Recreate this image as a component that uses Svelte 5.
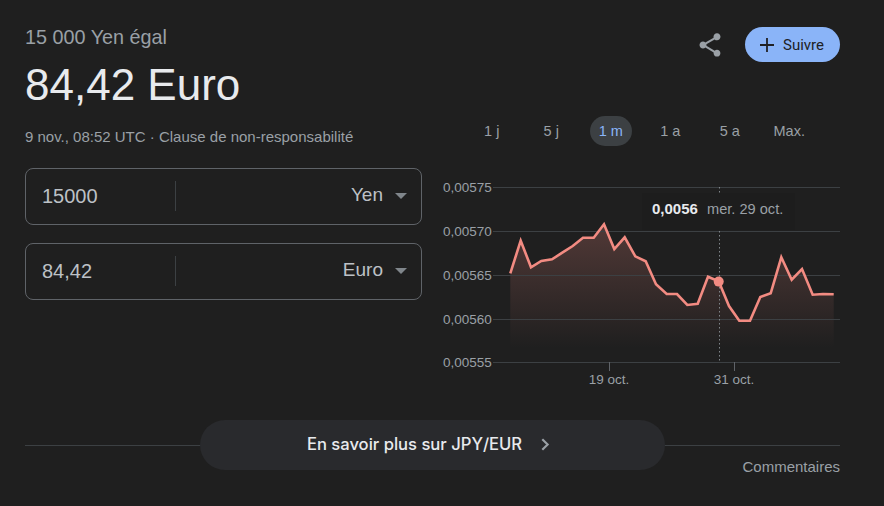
<script>
  const raw = [[211,310],[242,212],[273,292],[304,273],[336,268],[367,248],[398,228],[429,203],[461,203],[492,163],[523,237],[554,202],[586,259],[617,274],[648,343],[680,372],[711,372],[742,405],[773,401],[804,320],[836,334],[867,408],[898,452],[930,452],[961,381],[992,370],[1024,262],[1055,329],[1086,297],[1118,374],[1149,372],[1181,373]];
  const pts = raw.map(([x, y]) => [+(x / 3).toFixed(1), +(y / 3).toFixed(1)]);
  const line = pts.map((p) => p.join(',')).join(' ');
  const areaBottom = 178;
  const area = `${pts[0][0]},${areaBottom} ${line} ${pts[pts.length - 1][0]},${areaBottom}`;
  const grid = [
    { y: 17.5, label: '0,00575' },
    { y: 61.5, label: '0,00570' },
    { y: 105.5, label: '0,00565' },
    { y: 149.5, label: '0,00560' },
    { y: 192.5, label: '0,00555' }
  ];
  const ranges = ['1 j', '5 j', '1 m', '1 a', '5 a', 'Max.'];
</script>

<div class="page">
  <div class="main">
    <section class="left">
      <div class="sub">15 000 Yen égal</div>
      <div class="value">84,42 Euro</div>
      <div class="meta">9 nov., 08:52 UTC · Clause de non-responsabilité</div>
      <div class="fields">
        <div class="field">
          <span class="num">15000</span>
          <span class="sep"></span>
          <span class="cur">Yen</span>
          <span class="caret"></span>
        </div>
        <div class="field">
          <span class="num">84,42</span>
          <span class="sep"></span>
          <span class="cur">Euro</span>
          <span class="caret"></span>
        </div>
      </div>
    </section>

    <section class="right">
      <div class="actions">
        <svg class="share" viewBox="0 0 24 24" width="28" height="28" aria-hidden="true">
          <path fill="#9aa0a6" d="M18 16.08c-.76 0-1.44.3-1.96.77L8.91 12.7c.05-.23.09-.46.09-.7s-.04-.47-.09-.7l7.05-4.11c.54.5 1.25.81 2.04.81 1.66 0 3-1.34 3-3s-1.34-3-3-3-3 1.34-3 3c0 .24.04.47.09.7L8.04 9.81C7.5 9.31 6.79 9 6 9c-1.66 0-3 1.34-3 3s1.34 3 3 3c.79 0 1.5-.31 2.04-.81l7.12 4.16c-.05.21-.08.43-.08.65 0 1.61 1.31 2.92 2.92 2.92s2.92-1.31 2.92-2.92-1.31-2.92-2.92-2.92z"/>
        </svg>
        <div class="follow">
          <svg viewBox="0 0 14 14" width="14" height="14" aria-hidden="true">
            <path d="M7 0v14M0 7h14" stroke="#202124" stroke-width="1.8" fill="none"/>
          </svg>
          <span>Suivre</span>
        </div>
      </div>

      <div class="ranges">
        {#each ranges as r}
          <div class="cell"><span class="range" class:active={r === '1 m'}>{r}</span></div>
        {/each}
      </div>

      <svg class="chart" width="400" height="220" viewBox="0 0 400 220" role="img">
        <defs>
          <linearGradient id="fill" x1="0" y1="0" x2="0" y2="1">
            <stop offset="0" stop-color="#f28b82" stop-opacity="0.24"/>
            <stop offset="1" stop-color="#f28b82" stop-opacity="0"/>
          </linearGradient>
        </defs>
        <polygon points={area} fill="url(#fill)"/>
        {#each grid as g}
          <line x1="53" x2="400" y1={g.y} y2={g.y} stroke="#3c4043" stroke-width="1"/>
          <text x="3" y={g.y + 4} class="axis">{g.label}</text>
        {/each}
        <line x1="169.5" x2="169.5" y1="192" y2="201" stroke="#5f6368"/>
        <line x1="294.5" x2="294.5" y1="192" y2="201" stroke="#5f6368"/>
        <text x="169" y="214" class="axis mid">19 oct.</text>
        <text x="294" y="214" class="axis mid">31 oct.</text>
        <line x1="279.5" x2="279.5" y1="17" y2="192" stroke="#80868b" stroke-dasharray="1.5 2.5"/>
        <polyline points={line} fill="none" stroke="#f28b82" stroke-width="2.6" stroke-linejoin="miter"/>
        <circle cx="278.7" cy="111.6" r="5" fill="#f28b82"/>
        <rect x="202" y="23" width="153" height="37" fill="#1d1d1d"/>
        <text x="212" y="44" class="tip-value">0,0056</text>
        <text x="267" y="44" class="tip-date">mer. 29 oct.</text>
      </svg>
    </section>
  </div>

  <div class="foot">
    <div class="rule">
      <div class="more">
        <span>En savoir plus sur JPY/EUR</span>
        <svg viewBox="0 0 10 14" width="11" height="15" aria-hidden="true">
          <path d="M2 2l5 5-5 5" fill="none" stroke="#9aa0a6" stroke-width="2"/>
        </svg>
      </div>
    </div>
    <div class="feedback">Commentaires</div>
  </div>
</div>

<style>
  :global(body) {
    margin: 0;
    background: #1f1f1f;
  }
  .page {
    width: 884px;
    height: 506px;
    box-sizing: border-box;
    padding: 0 44px 0 25px;
    font-family: "Liberation Sans", Arial, sans-serif;
    color: #e8eaed;
    overflow: hidden;
  }
  .main {
    display: grid;
    grid-template-columns: 397px 400px;
    column-gap: 18px;
    height: 420px;
  }
  .left {
    padding-top: 26px;
  }
  .sub {
    font-size: 19.8px;
    line-height: 22px;
    color: #9aa0a6;
  }
  .value {
    margin-top: 11px;
    font-size: 44px;
    line-height: 52px;
    color: #e8eaed;
  }
  .meta {
    margin-top: 16px;
    font-size: 15px;
    line-height: 20px;
    color: #9aa0a6;
  }
  .fields {
    margin-top: 21px;
    display: flex;
    flex-direction: column;
    gap: 18px;
  }
  .field {
    height: 57px;
    box-sizing: border-box;
    border: 1px solid #5f6368;
    border-radius: 8px;
    display: flex;
    align-items: center;
    padding: 0 14px 0 16px;
    color: #bdc1c6;
  }
  .num {
    width: 133px;
    flex: none;
    font-size: 20px;
    color: #bdc1c6;
  }
  .sep {
    width: 1px;
    height: 30px;
    margin-bottom: 1px;
    background: #3c4043;
    flex: none;
  }
  .cur {
    margin-left: auto;
    padding-bottom: 3px;
    font-size: 19px;
    color: #bdc1c6;
  }
  .caret {
    margin-left: 12px;
    margin-bottom: 2px;
    width: 0;
    height: 0;
    border-left: 6px solid transparent;
    border-right: 6px solid transparent;
    border-top: 6px solid #80868b;
  }
  .right {
    display: flex;
    flex-direction: column;
    align-items: stretch;
  }
  .actions {
    margin-top: 27px;
    height: 35px;
    display: flex;
    justify-content: flex-end;
    align-items: center;
  }
  .share {
    margin-right: 21px;
  }
  .follow {
    width: 95px;
    height: 35px;
    box-sizing: border-box;
    border-radius: 18px;
    background: #8ab4f8;
    color: #202124;
    font-family: Roboto, "Liberation Sans", sans-serif;
    font-size: 15px;
    display: flex;
    align-items: center;
    gap: 9px;
    padding-left: 15px;
  }
  .ranges {
    margin-top: 54px;
    height: 30px;
    display: flex;
    align-items: center;
    padding-left: 22px;
    font-size: 14.5px;
    color: #9aa0a6;
  }
  .cell {
    width: 59.5px;
    flex: none;
    display: flex;
    justify-content: center;
  }
  .range {
    height: 30px;
    line-height: 30px;
    white-space: nowrap;
  }
  .range.active {
    width: 42px;
    text-align: center;
    background: #3c4043;
    color: #8ab4f8;
    border-radius: 15px;
  }
  .chart {
    margin-top: 24px;
    display: block;
    flex: none;
  }
  .axis {
    font-size: 13.5px;
    font-family: "Liberation Sans", Arial, sans-serif;
    fill: #9aa0a6;
  }
  .mid {
    text-anchor: middle;
  }
  .tip-value {
    font-size: 15px;
    font-weight: 700;
    fill: #e8eaed;
    font-family: "Liberation Sans", Arial, sans-serif;
  }
  .tip-date {
    font-size: 14.6px;
    fill: #9aa0a6;
    font-family: "Liberation Sans", Arial, sans-serif;
  }
  .rule {
    height: 50px;
    display: flex;
    align-items: center;
    justify-content: center;
    background: linear-gradient(#3c4043, #3c4043) center / 100% 1px no-repeat;
  }
  .more {
    width: 465px;
    height: 50px;
    box-sizing: border-box;
    padding-right: 7px;
    padding-bottom: 2px;
    border-radius: 25px;
    background: #292a2d;
    display: flex;
    align-items: center;
    justify-content: center;
    gap: 18px;
    font-family: Inter, Roboto, "Liberation Sans", sans-serif;
    font-size: 16.6px;
    font-weight: 500;
    color: #e8eaed;
  }
  .feedback {
    margin-top: -12px;
    text-align: right;
    font-size: 15px;
    line-height: 18px;
    color: #9aa0a6;
  }
</style>
